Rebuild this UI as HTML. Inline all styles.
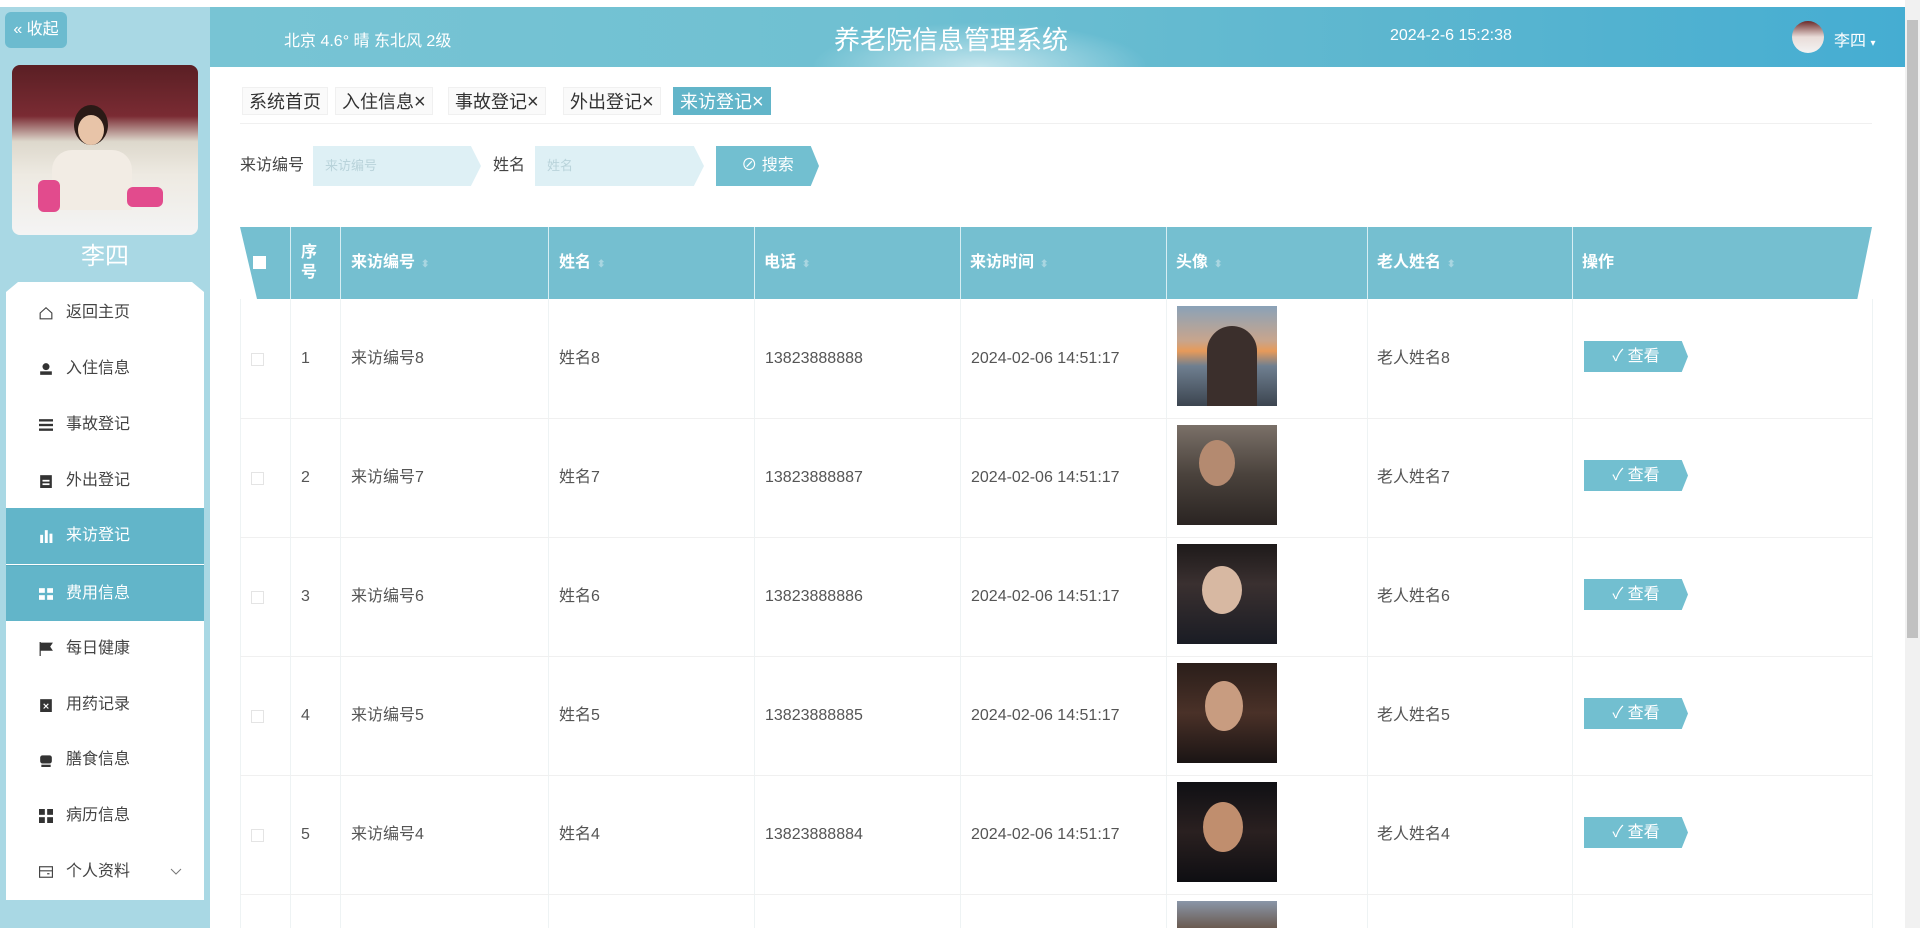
<!DOCTYPE html>
<html><head><meta charset="utf-8">
<style>
*{box-sizing:border-box;margin:0;padding:0}
body{width:1920px;height:928px;overflow:hidden;background:#fff;font-family:"Liberation Sans","Noto Sans CJK SC",sans-serif;position:relative;color:#555}
.abs{position:absolute}
#side{left:0;top:7px;width:210px;height:921px;background:#a9d8e4}
#collapse{left:5px;top:12px;width:62px;height:36px;background:#6cbbcf;border-radius:6px;color:#fff;font-size:16px;line-height:36px;text-align:center}
#photo{left:12px;top:65px;width:186px;height:170px;border-radius:8px;background:linear-gradient(180deg,#5a1f24 0%,#7a2b33 30%,#ddd8cc 45%,#eeeae2 65%,#f4f4f4 100%);overflow:hidden}
#uname{left:0;top:236px;width:210px;text-align:center;color:#fff;font-size:24px}
#menu{left:6px;top:282px;width:198px;height:618px;background:#fff;clip-path:polygon(12px 0,186px 0,198px 10px,198px 100%,0 100%,0 10px)}
.mi{position:absolute;left:0;width:198px;height:56px;line-height:56px;font-size:16px;color:#444;padding-left:60px}
.mi.act{background:#62b5c9;color:#fff}
.ic{position:absolute;left:33px;top:21px;width:14px;height:14px}
#hdr{left:210px;top:7px;width:1695px;height:60px;background:linear-gradient(90deg,#78c4d4 0%,#6fc0d2 40%,#5cb6cf 70%,#45add2 100%);color:#fff}
#sb{left:1905px;top:0;width:15px;height:928px;background:#f1f1f1}
#thumb{left:1907px;top:20px;width:11px;height:618px;background:#c1c1c1}
.tab{position:absolute;top:87px;height:28px;line-height:28px;font-size:18px;color:#333;background:#fafafa;padding:0 6px;border:1px solid #f0f0f0}
.tab.act{background:#62b5c9;color:#fff;border-color:#62b5c9}
.tab b{font-weight:normal;font-size:20px}
.lbl{position:absolute;top:146px;line-height:40px;font-size:16px;color:#444}
.inp{position:absolute;top:146px;height:40px;background:#def0f5;clip-path:polygon(0 0,94% 0,100% 50%,94% 100%,0 100%);font-size:13px;color:#b9d3da;line-height:40px;padding-left:12px}
#btn{left:716px;top:146px;width:103px;height:40px;background:#72bfd0;clip-path:polygon(0 0,92% 0,100% 50%,92% 100%,0 100%);color:#fff;font-size:16px;line-height:40px;text-align:center}
#th{left:240px;top:227px;width:1632px;height:72px;background:#75bfd0;clip-path:polygon(0 0,100% 0,99.1% 100%,17px 100%)}
.hc{position:absolute;top:227px;height:72px;line-height:72px;color:#fff;font-weight:bold;font-size:16px;padding-left:10px}
.vl{position:absolute;width:1px;background:#eef3f4}
.vlh{position:absolute;top:227px;height:72px;width:1px;background:#d7eef3}
.hl{position:absolute;left:240px;width:1632px;height:1px;background:#f0f0f0}
.c{position:absolute;font-size:16px;color:#555;line-height:20px}
.img{position:absolute;left:1177px;width:100px;height:100px}
.vb{position:absolute;left:1584px;width:104px;height:31px;background:#72bfd0;clip-path:polygon(0 0,94% 0,100% 50%,94% 100%,0 100%);color:#fff;font-size:16px;line-height:31px;text-align:center}
.cb{position:absolute;left:251px;width:13px;height:13px;border:1px solid #e4e4e4}
.sort{color:#a9d6e1;font-size:10px;margin-left:6px}
</style></head><body>
<div class="abs" id="side"></div>
<div class="abs" id="collapse">« 收起</div>
<div class="abs" id="photo">
 <div class="abs" style="left:62px;top:40px;width:34px;height:40px;border-radius:50%;background:#2a1a16"></div>
 <div class="abs" style="left:66px;top:50px;width:26px;height:30px;border-radius:50%;background:#e8c4a8"></div>
 <div class="abs" style="left:40px;top:85px;width:80px;height:60px;border-radius:20px 20px 0 0;background:#f2ece4"></div>
 <div class="abs" style="left:26px;top:115px;width:22px;height:32px;background:#e24b8d;border-radius:6px"></div>
 <div class="abs" style="left:115px;top:122px;width:36px;height:20px;background:#e24b8d;border-radius:6px"></div>
</div>
<div class="abs" id="uname">李四</div>
<div class="abs" id="menu">
 <div class="mi" style="top:3px"><svg class="ic" viewBox="0 0 12 12"><path d="M1 6L6 1.5 11 6V11H1Z" fill="none" stroke="#444"/></svg>返回主页</div>
 <div class="mi" style="top:59px"><svg class="ic" viewBox="0 0 12 12"><circle cx="6" cy="4" r="3" fill="#333"/><rect x="1" y="8" width="10" height="3" fill="#333"/></svg>入住信息</div>
 <div class="mi" style="top:115px"><svg class="ic" viewBox="0 0 12 12"><rect x="0" y="1" width="12" height="2" fill="#333"/><rect x="0" y="5" width="12" height="2" fill="#333"/><rect x="0" y="9" width="12" height="2" fill="#333"/></svg>事故登记</div>
 <div class="mi" style="top:171px"><svg class="ic" viewBox="0 0 12 12"><rect x="1" y="1" width="10" height="11" fill="#333"/><rect x="3" y="5" width="6" height="1.5" fill="#fff"/><rect x="3" y="8" width="6" height="1.5" fill="#fff"/></svg>外出登记</div>
 <div class="mi act" style="top:226px"><svg class="ic" viewBox="0 0 12 12"><rect x="1" y="5" width="2.5" height="7" fill="#fff"/><rect x="5" y="1" width="2.5" height="11" fill="#fff"/><rect x="9" y="4" width="2.5" height="8" fill="#fff"/></svg>来访登记</div>
 <div class="mi act" style="top:283px;border-top:1px solid #58a9bd"><svg class="ic" viewBox="0 0 12 12"><rect x="0" y="1" width="5" height="4" fill="#fff"/><rect x="7" y="1" width="5" height="4" fill="#fff"/><rect x="0" y="7" width="5" height="4" fill="#fff"/><rect x="7" y="7" width="5" height="4" fill="#fff"/></svg>费用信息</div>
 <div class="mi" style="top:339px"><svg class="ic" viewBox="0 0 12 12"><path d="M1 0V12M1 1H11L9 4 11 7H1" fill="#333" stroke="#333"/></svg>每日健康</div>
 <div class="mi" style="top:395px"><svg class="ic" viewBox="0 0 12 12"><rect x="1" y="1" width="10" height="11" fill="#333"/><path d="M4 5L8 9M8 5L4 9" stroke="#fff"/></svg>用药记录</div>
 <div class="mi" style="top:450px"><svg class="ic" viewBox="0 0 12 12"><rect x="1" y="2" width="10" height="7" rx="2" fill="#333"/><rect x="2" y="10" width="8" height="2" fill="#333"/></svg>膳食信息</div>
 <div class="mi" style="top:506px"><svg class="ic" viewBox="0 0 12 12"><rect x="0" y="0" width="5" height="5" fill="#333"/><rect x="7" y="0" width="5" height="5" fill="#333"/><rect x="0" y="7" width="5" height="5" fill="#333"/><rect x="7" y="7" width="5" height="5" fill="#333"/></svg>病历信息</div>
 <div class="mi" style="top:562px"><svg class="ic" viewBox="0 0 12 12"><rect x="0.5" y="1.5" width="11" height="9" fill="none" stroke="#444"/><path d="M0.5 5H11.5M7 7.5H9" stroke="#444"/></svg>个人资料<svg style="position:absolute;left:164px;top:24px" width="12" height="8" viewBox="0 0 12 8"><path d="M1 1L6 6 11 1" fill="none" stroke="#777"/></svg></div>
</div>

<div class="abs" id="hdr">
 <div class="abs" style="left:600px;top:15px;width:340px;height:45px;background:radial-gradient(ellipse at 50% 100%,rgba(255,255,255,.6),rgba(255,255,255,0) 70%)"></div>
 <div class="abs" style="left:74px;top:20px;font-size:16px">北京 4.6° 晴 东北风 2级</div>
 <div class="abs" style="left:624px;top:13px;font-size:26px">养老院信息管理系统</div>
 <div class="abs" style="left:1180px;top:20px;font-size:16px">2024-2-6 15:2:38</div>
 <div class="abs" style="left:1582px;top:14px;width:32px;height:32px;border-radius:50%;background:linear-gradient(180deg,#6b2a2a 0%,#e9dcd8 50%,#f3f3f3 100%)"></div>
 <div class="abs" style="left:1624px;top:20px;font-size:16px">李四 <span style="font-size:10px">▾</span></div>
</div>
<div class="abs" id="sb"></div><div class="abs" id="thumb"></div>

<div class="tab" style="left:242px">系统首页</div>
<div class="tab" style="left:335px">入住信息<b>×</b></div>
<div class="tab" style="left:448px">事故登记<b>×</b></div>
<div class="tab" style="left:563px">外出登记<b>×</b></div>
<div class="tab act" style="left:673px">来访登记<b>×</b></div>
<div class="abs" style="left:240px;top:123px;width:1632px;height:1px;background:#f0f0f0"></div>

<div class="lbl" style="left:240px">来访编号</div>
<div class="inp" style="left:313px;width:168px">来访编号</div>
<div class="lbl" style="left:493px">姓名</div>
<div class="inp" style="left:535px;width:169px">姓名</div>
<div class="abs" id="btn">⊘ 搜索</div>

<div class="abs" id="th"></div>
<div class="abs" style="left:253px;top:256px;width:13px;height:13px;background:#fff"></div>
<div class="hc" style="left:291px;line-height:20px;padding-top:16px">序<br>号</div>
<div class="hc" style="left:341px">来访编号<span class="sort">⬍</span></div>
<div class="hc" style="left:549px">姓名<span class="sort">⬍</span></div>
<div class="hc" style="left:754px">电话<span class="sort">⬍</span></div>
<div class="hc" style="left:960px">来访时间<span class="sort">⬍</span></div>
<div class="hc" style="left:1166px">头像<span class="sort">⬍</span></div>
<div class="hc" style="left:1367px">老人姓名<span class="sort">⬍</span></div>
<div class="hc" style="left:1572px">操作</div>
<div class="vlh" style="left:290px"></div><div class="vlh" style="left:340px"></div><div class="vlh" style="left:548px"></div><div class="vlh" style="left:754px"></div><div class="vlh" style="left:960px"></div><div class="vlh" style="left:1166px"></div><div class="vlh" style="left:1367px"></div><div class="vlh" style="left:1572px"></div>

<div class="vl" style="left:240px;top:299px;height:629px"></div>
<div class="vl" style="left:290px;top:299px;height:629px"></div>
<div class="vl" style="left:340px;top:299px;height:629px"></div>
<div class="vl" style="left:548px;top:299px;height:629px"></div>
<div class="vl" style="left:754px;top:299px;height:629px"></div>
<div class="vl" style="left:960px;top:299px;height:629px"></div>
<div class="vl" style="left:1166px;top:299px;height:629px"></div>
<div class="vl" style="left:1367px;top:299px;height:629px"></div>
<div class="vl" style="left:1572px;top:299px;height:629px"></div>
<div class="vl" style="left:1872px;top:299px;height:629px"></div>

<div class="hl" style="top:418px"></div><div class="hl" style="top:537px"></div><div class="hl" style="top:656px"></div><div class="hl" style="top:775px"></div><div class="hl" style="top:894px"></div>

<div class="cb" style="top:353px"></div><div class="c" style="left:301px;top:349px">1</div><div class="c" style="left:351px;top:349px">来访编号8</div><div class="c" style="left:559px;top:349px">姓名8</div><div class="c" style="left:765px;top:349px">13823888888</div><div class="c" style="left:971px;top:349px">2024-02-06 14:51:17</div><div class="img" style="top:306px;background:linear-gradient(180deg,#8aa2b8 0%,#c9a58c 35%,#e79a5a 45%,#6f7f90 60%,#3c4550 100%)"><div class="abs" style="left:30px;top:20px;width:50px;height:80px;border-radius:25px 25px 0 0;background:#3b2f2c"></div></div><div class="c" style="left:1377px;top:349px">老人姓名8</div><div class="vb" style="top:341px">✓ 查看</div>

<div class="cb" style="top:472px"></div><div class="c" style="left:301px;top:468px">2</div><div class="c" style="left:351px;top:468px">来访编号7</div><div class="c" style="left:559px;top:468px">姓名7</div><div class="c" style="left:765px;top:468px">13823888887</div><div class="c" style="left:971px;top:468px">2024-02-06 14:51:17</div><div class="img" style="top:425px;background:linear-gradient(180deg,#7a7068 0%,#4a423c 50%,#2a2422 100%)"><div class="abs" style="left:22px;top:15px;width:36px;height:46px;border-radius:50%;background:#b48a70"></div></div><div class="c" style="left:1377px;top:468px">老人姓名7</div><div class="vb" style="top:460px">✓ 查看</div>

<div class="cb" style="top:591px"></div><div class="c" style="left:301px;top:587px">3</div><div class="c" style="left:351px;top:587px">来访编号6</div><div class="c" style="left:559px;top:587px">姓名6</div><div class="c" style="left:765px;top:587px">13823888886</div><div class="c" style="left:971px;top:587px">2024-02-06 14:51:17</div><div class="img" style="top:544px;background:linear-gradient(180deg,#1e1a1a 0%,#3a3030 40%,#1a1c24 100%)"><div class="abs" style="left:25px;top:22px;width:40px;height:48px;border-radius:50%;background:#d7b8a2"></div></div><div class="c" style="left:1377px;top:587px">老人姓名6</div><div class="vb" style="top:579px">✓ 查看</div>

<div class="cb" style="top:710px"></div><div class="c" style="left:301px;top:706px">4</div><div class="c" style="left:351px;top:706px">来访编号5</div><div class="c" style="left:559px;top:706px">姓名5</div><div class="c" style="left:765px;top:706px">13823888885</div><div class="c" style="left:971px;top:706px">2024-02-06 14:51:17</div><div class="img" style="top:663px;background:linear-gradient(180deg,#2a1e1a 0%,#4a3128 50%,#1a1414 100%)"><div class="abs" style="left:28px;top:18px;width:38px;height:50px;border-radius:50%;background:#c89c80"></div></div><div class="c" style="left:1377px;top:706px">老人姓名5</div><div class="vb" style="top:698px">✓ 查看</div>

<div class="cb" style="top:829px"></div><div class="c" style="left:301px;top:825px">5</div><div class="c" style="left:351px;top:825px">来访编号4</div><div class="c" style="left:559px;top:825px">姓名4</div><div class="c" style="left:765px;top:825px">13823888884</div><div class="c" style="left:971px;top:825px">2024-02-06 14:51:17</div><div class="img" style="top:782px;background:linear-gradient(180deg,#101014 0%,#2a2020 50%,#0e0e12 100%)"><div class="abs" style="left:26px;top:20px;width:40px;height:50px;border-radius:50%;background:#c08e6e"></div></div><div class="c" style="left:1377px;top:825px">老人姓名4</div><div class="vb" style="top:817px">✓ 查看</div>

<div class="img" style="top:901px;height:27px;background:linear-gradient(180deg,#8a96a8,#6a5a50)"></div>
</body></html>
